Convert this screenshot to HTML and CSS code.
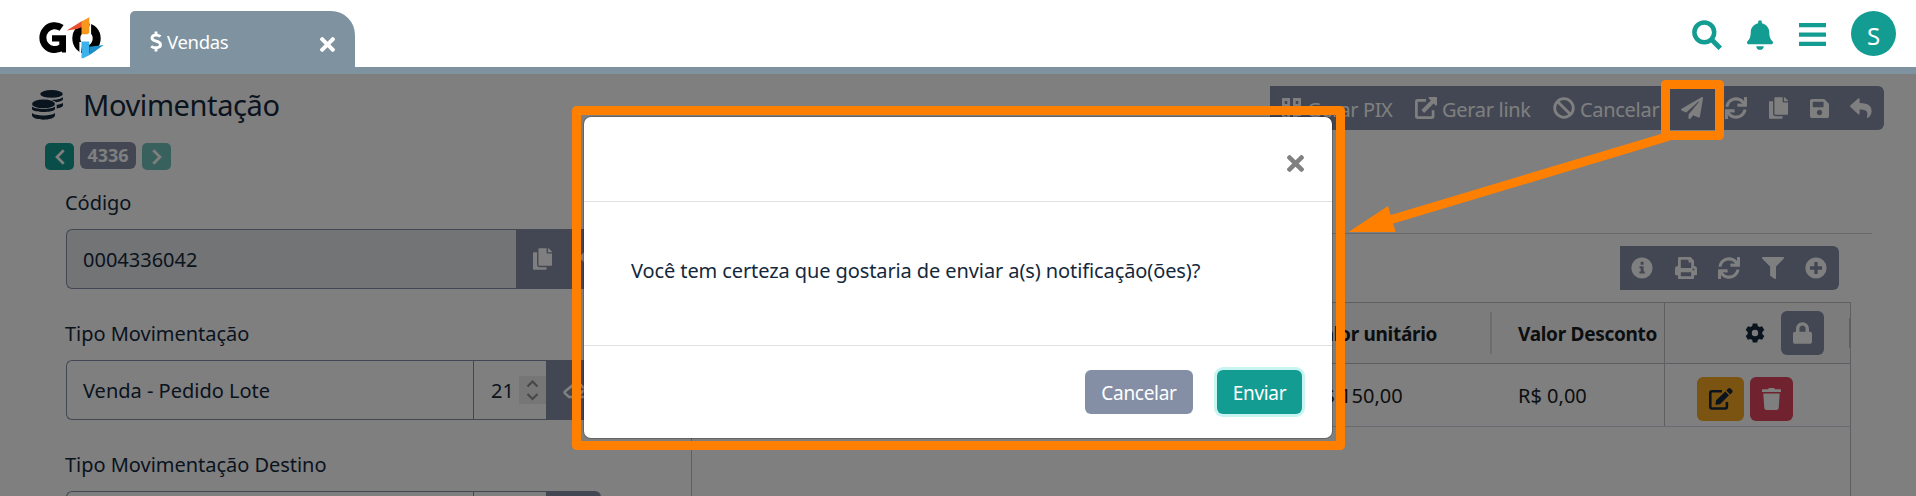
FILE: index.html
```html
<!DOCTYPE html>
<html lang="pt-BR">
<head>
<meta charset="utf-8">
<title>Movimentação</title>
<link rel="stylesheet" href="styles.css">
</head>
<body>
<svg class="sprite" aria-hidden="true">
  <symbol id="times" viewBox="0 80 352 352"><path d="M242.72 256l100.07-100.07c12.28-12.28 12.28-32.19 0-44.48l-22.24-22.24c-12.28-12.28-32.19-12.28-44.48 0L176 189.28 75.93 89.21c-12.28-12.28-32.19-12.28-44.48 0L9.21 111.45c-12.28 12.28-12.28 32.19 0 44.48L109.28 256 9.21 356.07c-12.28 12.28-12.28 32.19 0 44.48l22.24 22.24c12.28 12.28 32.2 12.28 44.48 0L176 322.72l100.07 100.07c12.28 12.28 32.2 12.28 44.48 0l22.24-22.24c12.28-12.28 12.28-32.19 0-44.48L242.72 256z"/></symbol>
  <symbol id="sync" viewBox="0 0 512 512"><path d="M440.65 12.57l4 82.77A247.16 247.16 0 0 0 255.83 8C134.73 8 33.91 94.92 12.29 209.82A12 12 0 0 0 24.09 224h49.05a12 12 0 0 0 11.67-9.26 175.91 175.91 0 0 1 317-56.94l-101.46-4.86a12 12 0 0 0-12.57 12v47.41a12 12 0 0 0 12 12H500a12 12 0 0 0 12-12V12a12 12 0 0 0-12-12h-47.37a12 12 0 0 0-11.98 12.57zM255.83 432a175.61 175.61 0 0 1-146-77.8l101.8 4.87a12 12 0 0 0 12.57-12v-47.4a12 12 0 0 0-12-12H12a12 12 0 0 0-12 12V500a12 12 0 0 0 12 12h47.35a12 12 0 0 0 12-12.6l-4.15-82.57A247.17 247.17 0 0 0 255.83 504c121.11 0 221.93-86.92 243.55-201.82a12 12 0 0 0-11.8-14.18h-49.05a12 12 0 0 0-11.67 9.26A175.86 175.86 0 0 1 255.83 432z"/></symbol>
  <symbol id="copy" viewBox="0 0 448 512"><path d="M320 448v40c0 13.255-10.745 24-24 24H24c-13.255 0-24-10.745-24-24V120c0-13.255 10.745-24 24-24h72v296c0 30.879 25.121 56 56 56h168zm0-344V0H152c-13.255 0-24 10.745-24 24v368c0 13.255 10.745 24 24 24h272c13.255 0 24-10.745 24-24V128H344c-13.2 0-24-10.8-24-24zm120.971-31.029L375.029 7.029A24 24 0 0 0 358.059 0H352v96h96v-6.059a24 24 0 0 0-7.029-16.97z"/></symbol>
  <symbol id="save" viewBox="0 32 448 448"><path d="M433.941 129.941l-83.882-83.882A48 48 0 0 0 316.118 32H48C21.49 32 0 53.49 0 80v352c0 26.51 21.49 48 48 48h352c26.51 0 48-21.49 48-48V163.882a48 48 0 0 0-14.059-33.941zM224 416c-35.346 0-64-28.654-64-64 0-35.346 28.654-64 64-64s64 28.654 64 64c0 35.346-28.654 64-64 64zm96-304.52V212c0 6.627-5.373 12-12 12H76c-6.627 0-12-5.373-12-12V108c0-6.627 5.373-12 12-12h228.52c3.183 0 6.235 1.264 8.485 3.515l3.48 3.48A11.996 11.996 0 0 1 320 111.48z"/></symbol>
  <symbol id="plane" viewBox="0 0 512 512"><path d="M476 3.2L12.5 270.6c-18.1 10.4-15.8 35.6 2.2 43.2L121 358.4l287.3-253.2c5.5-4.9 13.3 2.6 8.6 8.3L176 407v80.5c0 23.6 28.5 32.9 42.5 15.8L282 426l124.6 52.2c14.2 6 30.4-2.9 33-18.2l72-432C515 7.8 493.3-6.8 476 3.2z"/></symbol>
  <symbol id="lock" viewBox="0 0 448 512"><path d="M400 224h-24v-72C376 68.2 307.8 0 224 0S72 68.2 72 152v72H48c-26.5 0-48 21.5-48 48v192c0 26.5 21.5 48 48 48h352c26.5 0 48-21.5 48-48V272c0-26.5-21.5-48-48-48zm-104 0H152v-72c0-39.7 32.3-72 72-72s72 32.3 72 72v72z"/></symbol>
  <symbol id="bell" viewBox="0 0 448 512"><path d="M224 512c35.32 0 63.97-28.65 63.97-64H160.03c0 35.35 28.65 64 63.97 64zm215.39-149.71c-19.32-20.76-55.47-51.99-55.47-154.29 0-77.7-54.48-139.9-127.94-155.16V32c0-17.67-14.32-32-31.98-32s-31.98 14.33-31.98 32v20.84C118.56 68.1 64.08 130.3 64.08 208c0 102.3-36.15 133.53-55.47 154.29-6 6.45-8.66 14.16-8.61 21.71.11 16.4 12.98 32 32.1 32h383.8c19.12 0 32-15.6 32.1-32 .05-7.55-2.61-15.27-8.61-21.71z"/></symbol>
  <symbol id="reply" viewBox="0 0 22 20"><path d="M.5 7.3 8.2.5c.6-.5 1.4-.1 1.4.7v3.7c7.2.1 12 2 12 8.300 0 2.700-1.600 5.200-3.500 6.600-.6.400-1.400-.1-1.200-.8 1.700-6-.8-7.500-7.300-7.600v4.100c0 .8-.9 1.200-1.400.7L.5 9c-.5-.5-.5-1.200 0-1.700z"/></symbol>
  <symbol id="plus" viewBox="0 0 22 22"><path fill-rule="evenodd" d="M11 .4a10.600 10.600 0 1 0 0 21.200 10.600 10.600 0 0 0 0-21.200zM9.300 5h3.400v4.300H17v3.400h-4.300V17H9.300v-4.300H5V9.300h4.300z"/></symbol>
  <symbol id="info" viewBox="0 0 22 22"><path fill-rule="evenodd" d="M11 .4a10.600 10.600 0 1 0 0 21.200 10.600 10.600 0 0 0 0-21.200zM9.600 4.800h3v3h-3zM8.500 9.200h4.100v5.400h1.200v2H8.400v-2h1.300v-3.400H8.500z"/></symbol>
  <symbol id="print" viewBox="0 0 22 22"><path fill-rule="evenodd" d="M3 9V1.500C3 .7 3.600 0 4.500 0h11L19 3.500V9a3 3 0 0 1 3 3v5.500c0 .5-.3.800-.8.800H19v2.700c0 .6-.4 1-1 1H4c-.6 0-1-.4-1-1v-2.700H.8c-.5 0-.8-.3-.8-.8V12a3 3 0 0 1 3-3zm2.800-6.200V11h10.400V5.500h-2.700V2.800zM5.800 15.200v4h10.400v-4zM18.500 11.500a1 1 0 1 0 0 2 1 1 0 0 0 0-2z"/></symbol>
  <symbol id="filter" viewBox="0 0 22 22"><path d="M1 0h20c.9 0 1.300 1.100.7 1.700L14 9.500V21c0 .8-.9 1.200-1.600.8l-3.800-2.700c-.3-.2-.5-.5-.5-.9V9.500L.3 1.700C-.3 1.100.1 0 1 0z"/></symbol>
  <symbol id="trash" viewBox="0 0 19 22"><path d="M1 1.300h5L7 0h5l1 1.300h5c.6 0 1 .4 1 1v1.800H0V2.300c0-.6.400-1 1-1zM1.300 5.400h16.400l-1 14.700c-.1 1-.9 1.900-2 1.900H4.300c-1.100 0-1.900-.8-2-1.900z"/></symbol>
  <symbol id="edit" viewBox="0 0 24 22"><path d="M13 3.200H3A1.700 1.700 0 0 0 1.300 5v13.800c0 .9.800 1.700 1.700 1.700h13.200c.9 0 1.700-.8 1.700-1.700V14" fill="none" stroke="currentColor" stroke-width="2.600"/><path d="M16.300 3.500 20 7.200l-9 9-3.600.5c-.6.100-1-.4-.9-.9l.6-3.600zM17.300 2.500 19.200.6c.7-.7 1.700-.7 2.400 0l1.600 1.600c.6.700.6 1.600 0 2.300l-2 2z"/></symbol>
  <symbol id="external" viewBox="0 0 22 22"><path d="M11 3.300H2.700c-.8 0-1.300.6-1.300 1.300v14.700c0 .8.600 1.300 1.300 1.300h14c.8 0 1.400-.6 1.400-1.300v-6" fill="none" stroke="currentColor" stroke-width="2.700"/><path d="M14.500 0H21c.6 0 1 .4 1 1v6.500c0 .9-1 1.300-1.700.7l-1.700-1.700-9.400 9.400-2.800-2.800 9.500-9.500-2-2C13.200.9 13.600 0 14.500 0z"/></symbol>
  <symbol id="ban" viewBox="0 0 22 22"><g fill="none" stroke="currentColor" stroke-width="2.800"><circle cx="11" cy="11" r="9.300"/><path d="m4.500 4.500 13 13"/></g></symbol>
  <symbol id="qr" viewBox="0 0 19 22"><path fill-rule="evenodd" d="M0 1h8v9H0zm2.700 2.900v3.200h2.600V3.900zM11 1h8v9h-8zm2.700 2.900v3.200h2.600V3.900zM0 13h8v9H0zm2.700 2.900v3.200h2.600v-3.200zM11 13h3v3h5v3h-3v3h-5z"/></symbol>
  <symbol id="gear" viewBox="0 0 20 20"><path fill-rule="evenodd" d="M7.800.4h4.400l.6 2.700 1.700 1 2.600-.9 2.200 3.800-2 1.900v2.200l2 1.900-2.200 3.800-2.600-.9-1.700 1-.6 2.700H7.800l-.6-2.700-1.700-1-2.600.9L.7 13l2-1.900V8.900L.7 7l2.200-3.800 2.600.9 1.700-1zM10 6.800a3.200 3.200 0 1 0 0 6.400 3.200 3.200 0 0 0 0-6.400z"/></symbol>
  <symbol id="eraser" viewBox="0 0 26 22"><path d="M10.500 5.500 2 12.500c-.6.600-.6 1.300 0 1.900L6 18h17M10.500 5.500 14 2.500l8 7.500-8 8M9 7l8.500 8" fill="none" stroke="currentColor" stroke-width="2.600"/></symbol>
</svg>

<header class="topbar">
  <svg class="logo" viewBox="0 0 68 42">
    <path d="M24.600 10.900A11.900 11.900 0 1 0 24.600 30.400" fill="none" stroke="#000" stroke-width="7"/>
    <path d="M15 18.300h14V35.500h-4l-1.200-3.200-1.500-1.600V24.500H15z"/>
    <ellipse cx="49.500" cy="21.500" rx="10.200" ry="11.300" fill="none" stroke="#000" stroke-width="8"/>
    <path d="M53.500 5.500v11.800h-2zM43 37V25.500h2z" fill="#fff" stroke="#fff" stroke-width="1.200"/>
    <path d="M29.700 13.500 45 4v6l-5 2z" fill="#e8502f"/>
    <path d="M44.500 4.500 52.300.3V16l-2 1.300h-5.800z" fill="#f7981d"/>
    <path d="M44.500 24.500h7.800v13.700l-6.800 3.300-1-.8z" fill="#3db2ea"/>
    <path d="m52.300 29.700 14.400-1.700-14.400 10.200z" fill="#1e8fc9"/>
  </svg>
  <div class="tab">
    <svg class="dollar" viewBox="0 0 12 21"><path d="M10.500 5.500C9.500 4.600 8 4.100 6.200 4.100c-2.700 0-4.200 1.100-4.200 2.800 0 4.300 8.500 2.200 8.500 6.700 0 2-1.800 3.200-4.600 3.200-1.900 0-3.600-.6-4.700-1.600M6 .4v3.700m0 12.700v3.800" fill="none" stroke="#fff" stroke-width="2.900"/></svg>
    <span class="tab-name">Vendas</span>
    <svg class="tab-close"><use href="#times"/></svg>
  </div>
  <nav class="top-actions">
    <svg class="i-search" viewBox="0 0 30 30"><circle cx="12.300" cy="12.300" r="9.900" fill="none" stroke="currentColor" stroke-width="4.500"/><path d="m19.500 19.500 8.800 8.800" stroke="currentColor" stroke-width="5"/></svg>
    <svg class="i-bell"><use href="#bell"/></svg>
    <svg class="i-bars" viewBox="0 0 27 23"><path d="M0 0h27v4.300H0zM0 9.400h27v4.300H0zM0 18.700h27V23H0z"/></svg>
    <span class="avatar">S</span>
  </nav>
</header>

<main class="page">
  <section class="form-side">
    <div class="title-row">
      <svg class="coins" viewBox="0 0 31 30"><path d="M0 16.500c3 3.300 20 3.300 23 0v2.700c-2.500 3.700-20.500 3.700-23 0zM0 23c3 3.300 20 3.300 23 0v2.800c-2.500 5.200-20.500 5.200-23 0z"/><ellipse cx="11.500" cy="13.900" rx="11.500" ry="4.400"/><ellipse cx="19.500" cy="3.900" rx="11.300" ry="3.900"/><path d="M31 7v2.500c-1 1.600-3.500 2.300-7 2.700-1-1-2.500-1.800-4.500-2.300C25 9.800 29.500 8.800 31 7zM31 13v2.700c-1 1.500-3 2.300-6.300 2.800v-3.700c2.800-.3 5.200-.9 6.300-1.800z"/></svg>
      <h1 class="title">Movimentação</h1>
    </div>
    <div class="pager">
      <span class="page-btn"><svg viewBox="0 0 10 16"><path d="M8.700 1.300 2 8l6.700 6.700" fill="none" stroke="currentColor" stroke-width="2.700"/></svg></span>
      <span class="page-num">4336</span>
      <span class="page-btn off"><svg viewBox="0 0 10 16"><path d="M1.300 1.300 8 8l-6.700 6.700" fill="none" stroke="currentColor" stroke-width="2.700"/></svg></span>
    </div>
    <div class="fields">
      <div class="field">
        <label class="label">Código</label>
        <div class="group">
          <span class="input readonly">0004336042</span>
          <span class="addon"><svg class="i-copy"><use href="#copy"/></svg><svg class="i-reply"><use href="#reply"/></svg></span>
        </div>
      </div>
      <div class="field">
        <label class="label">Tipo Movimentação</label>
        <div class="group">
          <span class="input">Venda - Pedido Lote</span>
          <span class="num">21<svg class="spin" viewBox="0 0 27 28"><path d="m8.500 10.500 5-5 5 5M8.500 18l5 5 5-5" fill="none" stroke="#8c9094" stroke-width="2.200"/></svg></span>
          <span class="addon small"><svg class="i-eraser"><use href="#eraser"/></svg></span>
        </div>
      </div>
      <div class="field">
        <label class="label">Tipo Movimentação Destino</label>
        <div class="group">
          <span class="input"></span><span class="num"></span><span class="addon small"></span>
        </div>
      </div>
    </div>
  </section>

  <section class="grid-side">
    <div class="toolbar">
      <span class="tool t1"><svg class="i-qr"><use href="#qr"/></svg><b>Gerar PIX</b></span>
      <span class="tool t2"><svg class="i22"><use href="#external"/></svg><b>Gerar link</b></span>
      <span class="tool t3"><svg class="i22"><use href="#ban"/></svg><b>Cancelar</b></span>
      <svg class="i22"><use href="#plane"/></svg>
      <svg class="i22"><use href="#sync"/></svg>
      <svg class="i-copy"><use href="#copy"/></svg>
      <svg class="i-save"><use href="#save"/></svg>
      <svg class="i-reply"><use href="#reply"/></svg>
    </div>
    <div class="rule"></div>
    <div class="list-tools">
      <svg><use href="#info"/></svg><svg><use href="#print"/></svg><svg><use href="#sync"/></svg><svg><use href="#filter"/></svg><svg><use href="#plus"/></svg>
    </div>
    <div class="table">
      <div class="row head">
        <span class="cell c1">Valor unitário</span>
        <span class="cell c2">Valor Desconto</span>
        <span class="cell c3"><svg class="i-gear"><use href="#gear"/></svg><span class="sq lock"><svg class="i-lock"><use href="#lock"/></svg></span><i class="handle"></i></span>
      </div>
      <div class="row">
        <span class="cell c1">R$ 150,00</span>
        <span class="cell c2">R$ 0,00</span>
        <span class="cell c3 acts"><span class="sq edit"><svg class="i-edit"><use href="#edit"/></svg></span><span class="sq del"><svg class="i-trash"><use href="#trash"/></svg></span></span>
      </div>
    </div>
  </section>
  <div class="backdrop"></div>
</main>

<div class="modal">
  <div class="modal-head"><svg class="modal-close"><use href="#times"/></svg></div>
  <div class="modal-body"><span class="question">Você tem certeza que gostaria de enviar a(s) notificação(ões)?</span></div>
  <div class="modal-foot"><span class="btn cancel">Cancelar</span><span class="btn send">Enviar</span></div>
</div>

<svg class="marks" viewBox="0 0 1916 496">
  <g fill="none" stroke="#ff8000" stroke-width="9" stroke-linejoin="round">
    <path d="M576.500 110.500h764v335h-764z"/>
    <path d="M1665.500 84.500h54v51h-54z"/>
    <path d="M1388 220.500 1668 136.500" stroke-linecap="round"/>
  </g>
  <path d="M1348.500 232 1388 206l7.600 26z" fill="#ff8000"/>
</svg>
</body>
</html>
```
FILE: styles.css
```css
* { box-sizing: border-box; }
body { margin: 0; width: 1916px; height: 496px; overflow: hidden; position: relative; background: #fff; color: #14283c; font-family: "Noto Sans", "Open Sans", sans-serif; font-size: 20px; white-space: nowrap; }
svg { fill: currentColor; flex: none; display: block; }
.sprite { position: absolute; width: 0; height: 0; }

.topbar { height: 74px; border-bottom: 7px solid #7e939f; display: flex; padding: 11px 20px 0 37px; }
.logo { width: 68px; height: 42px; margin-top: 6px; fill: #000; }
.tab { width: 225px; height: 56px; margin-left: 25px; padding: 0 20px; background: #7e939f; border-radius: 5px 24px 0 0; color: #fff; display: flex; align-items: center; }
.dollar { width: 12px; height: 21px; margin-top: 5px; }
.tab-name { margin: 5px 0 0 5px; font-size: 18.500px; letter-spacing: -.3px; flex: 1; }
.tab-close { width: 15px; height: 15px; margin-top: 11px; }
.top-actions { margin-left: auto; display: flex; height: 45px; align-items: center; color: #139c92; }
.i-search { width: 30px; height: 30px; margin: 3px 25px 0 0; }
.i-bell { width: 26px; height: 30px; margin: 3px 26px 0 0; }
.i-bars { width: 27px; height: 23px; margin: 2px 25px 0 0; }
.avatar { width: 45px; height: 45px; border-radius: 50%; background: #139c92; color: #fff; text-align: center; font-size: 24px; line-height: 49px; }

.page { position: relative; height: 422px; display: flex; overflow: hidden; }
.backdrop { position: absolute; inset: 0; background: rgba(0, 0, 0, .5); }
.form-side { width: 691px; flex: none; }
.title-row { height: 62px; padding-left: 32px; display: flex; align-items: center; gap: 20px; }
.coins { width: 31px; height: 30px; }
.title { margin: 0; font-size: 29px; font-weight: 400; letter-spacing: -.4px; line-height: 40px; }
.pager { display: flex; gap: 6px; height: 28px; margin: 6px 0 0 45px; }
.page-btn { width: 29px; height: 27px; margin-top: 1px; border-radius: 5px; background: #139c92; color: #fff; display: flex; align-items: center; justify-content: center; }
.page-btn svg { width: 10px; height: 16px; }
.page-btn.off { opacity: .6; }
.page-num { width: 56px; height: 27px; border-radius: 6px; background: #848fa6; color: #fff; font-weight: 700; font-size: 18px; line-height: 27px; text-align: center; }
.fields { padding: 13px 0 0 66px; display: flex; flex-direction: column; gap: 25px; }
.label { display: block; height: 39px; line-height: 39px; margin: 0 0 7px -1px; letter-spacing: -.03px; }
.group { display: flex; height: 60px; width: 535px; }
.input { flex: 1; border: 1px solid #848fa6; border-right: 0; border-radius: 6px 0 0 6px; padding-left: 16px; line-height: 60px; }
.readonly { background: #e7e9ed; }
.addon { width: 85px; background: #848fa6; color: #fff; display: flex; align-items: center; padding-left: 17px; gap: 27px; border-radius: 0 6px 6px 0; }
.addon.small { width: 55px; }
.i-copy { width: 19px; height: 22px; }
.i-eraser { width: 26px; height: 22px; }
.num { width: 73px; border: 1px solid #848fa6; border-right: 0; display: flex; align-items: center; padding-left: 17px; gap: 5px; }
.spin { width: 27px; height: 28px; background: #ececee; }

.grid-side { flex: 1; padding-top: 12px; }
.toolbar { width: 614px; height: 44px; margin-left: 579px; background: #848fa6; color: #fff; border-radius: 0 6px 6px 0; display: flex; align-items: center; padding-left: 12px; }
.toolbar > svg { margin-right: 22px; }
.toolbar > .i-save { margin-right: 21px; }
.tool { display: flex; align-items: center; flex: none; }
.tool b { font-weight: 400; margin: 2px 0 0 5px; letter-spacing: -.3px; }
.t1 { width: 133px; }
.t1 b { margin-left: 6px; letter-spacing: -.4px; }
.t2 { width: 138px; }
.t3 { width: 128px; }
.i22 { width: 22px; height: 22px; }
.i-qr { width: 19px; height: 22px; }
.i-save { width: 19px; height: 19px; }
.i-reply { width: 22px; height: 20px; }
.rule { height: 1px; margin: 103px 44px 0 0; background: #cfd3da; }
.list-tools { width: 219px; height: 44px; margin: 12px 0 12px 929px; background: #848fa6; color: #fff; border-radius: 0 6px 6px 0; display: flex; align-items: center; padding-left: 11px; gap: 21.500px; }
.list-tools svg { width: 22px; height: 22px; }
.table { width: 1160px; height: 300px; border: 1px solid #babfc7; color: #181d1f; }
.row { display: flex; height: 63px; border-bottom: 1px solid #d3d6e4; padding-left: 619px; line-height: 64px; }
.head { height: 61px; border-color: #babfc7; font-weight: 700; font-size: 19px; letter-spacing: -.3px; line-height: 62px; background: #f9f9fa; }
.c1 { width: 207px; }
.c2 { width: 146px; }
.head .c1 { background: linear-gradient(#d9dbde, #d9dbde) 179px 9px / 2px 42px no-repeat; }
.c3 { flex: 1; border-left: 1px solid #babfc7; display: flex; align-items: center; }
.sq { height: 44px; border-radius: 6px; display: flex; align-items: center; justify-content: center; }
.i-gear { width: 20px; height: 20px; margin-left: 80px; color: #14283c; }
.lock { width: 43px; margin-left: 16px; background: #848fa6; color: #fff; }
.handle { width: 1px; height: 30px; margin-left: auto; background: #babfc7; }
.i-lock { width: 19px; height: 22px; }
.acts { padding: 7px 0 0 32px; }
.edit { width: 47px; background: #f8a824; color: #14283c; }
.del { width: 43px; margin-left: 6px; background: #e0465c; color: #fff; }
.i-edit { width: 24px; height: 22px; }
.i-trash { width: 19px; height: 22px; }

.modal { position: absolute; left: 584px; top: 117px; width: 748px; height: 321px; border-radius: 7px; background: #fff; box-shadow: 0 0 0 1px rgba(0, 0, 0, .2); display: flex; flex-direction: column; }
.modal-head { height: 85px; border-bottom: 1px solid #dee0e3; display: flex; align-items: center; justify-content: flex-end; padding: 9px 28px 0 0; color: #808080; }
.modal-close { width: 17px; height: 17px; }
.modal-body { flex: 1; display: flex; align-items: center; padding: 0 0 7px 47px; letter-spacing: -.1px; }
.modal-foot { height: 93px; border-top: 1px solid #dee0e3; display: flex; align-items: center; justify-content: flex-end; gap: 24px; padding-right: 30px; }
.btn { height: 44px; border-radius: 6px; color: #fff; line-height: 46px; text-align: center; font-size: 19px; }
.cancel { width: 108px; background: #848fa6; letter-spacing: -.3px; }
.send { width: 85px; background: #139c92; box-shadow: 0 0 0 3px #c8f5f1; letter-spacing: -.3px; }
.marks { position: absolute; left: 0; top: 0; width: 1916px; height: 496px; }
```
